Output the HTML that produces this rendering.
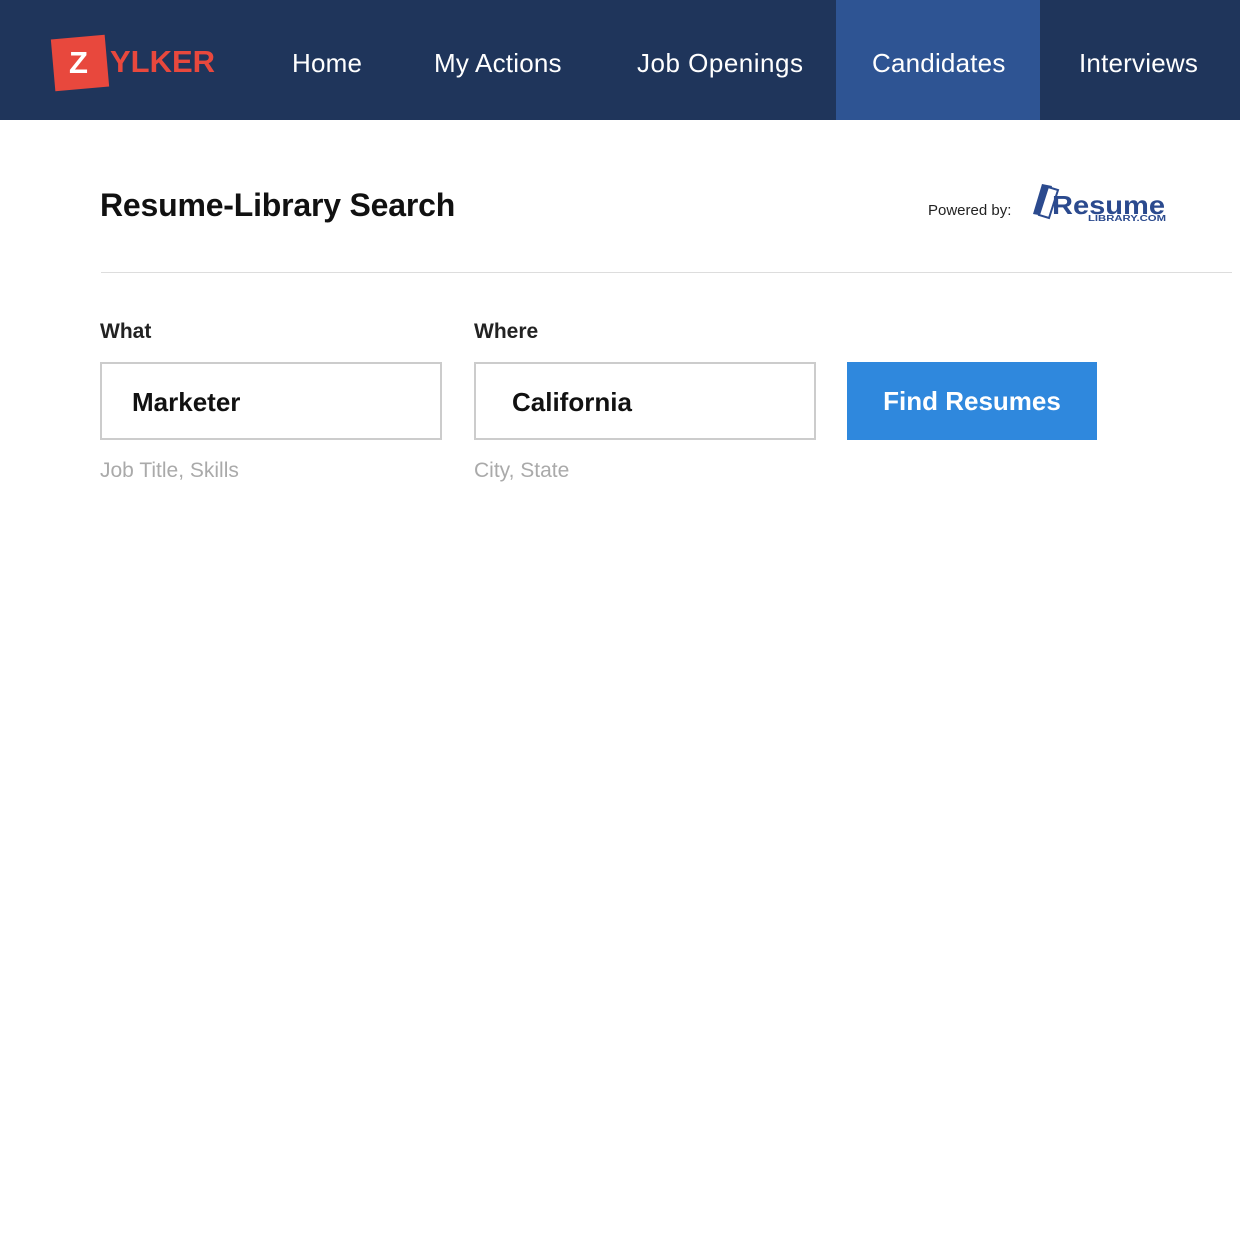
<!DOCTYPE html>
<html><head><style>
*{margin:0;padding:0;box-sizing:border-box}
body{width:1240px;height:1236px;background:#fff;font-family:"Liberation Sans",sans-serif;position:relative;overflow:hidden}
.nav{position:absolute;left:0;top:0;width:1240px;height:120px;background:#1f355b}
.nav .it{position:absolute;top:0;height:120px;line-height:126px;color:#fff;font-size:26px;letter-spacing:0.2px}
.act{background:#2e5493}
.lbl{position:absolute;font-size:21px;color:#222;font-weight:bold}
.inp{position:absolute;top:362px;height:78px;border:2px solid #ccc;font-size:26px;font-weight:bold;color:#111;line-height:76px}
.hint{position:absolute;top:459px;font-size:21px;color:#aaa}
</style></head><body>
<div class="nav">
 <div style="position:absolute;left:53px;top:37px;width:54px;height:52px;background:#e8483d;transform:rotate(-5deg)"></div>
 <div style="position:absolute;left:69px;top:45px;color:#fff;font-size:31px;font-weight:bold">Z</div>
 <div style="position:absolute;left:110px;top:44px;color:#e8483d;font-size:31px;font-weight:bold">YLKER</div>
 <div class="it" style="left:292px">Home</div>
 <div class="it" style="left:434px">My Actions</div>
 <div class="it" style="left:637px;letter-spacing:0.5px">Job Openings</div>
 <div class="it act" style="left:836px;width:204px;padding-left:36px">Candidates</div>
 <div class="it" style="left:1079px">Interviews</div>
</div>
<div style="position:absolute;left:100px;top:187px;font-size:32px;color:#111;font-weight:bold;letter-spacing:-0.2px">Resume-Library Search</div>
<div style="position:absolute;left:928px;top:202px;font-size:15px;color:#222">Powered by:</div>
<svg style="position:absolute;left:1030px;top:180px" width="140" height="44" viewBox="0 0 140 44">
 <path d="M3 34 L12 4 L22 6 L14 36Z" fill="#2b4a8e"/>
 <path d="M9 35 L18 7 L28 10 L19 38Z" fill="#fff" stroke="#2b4a8e" stroke-width="2"/>
 <text x="22" y="34" font-family="Liberation Sans" font-weight="bold" font-size="26" fill="#2b4a8e" textLength="113" lengthAdjust="spacingAndGlyphs">Resume</text>
 <text x="58" y="41" font-family="Liberation Sans" font-weight="bold" font-size="8" fill="#2b4a8e" textLength="78" lengthAdjust="spacingAndGlyphs">LIBRARY.COM</text>
</svg>
<div style="position:absolute;left:101px;top:272px;width:1131px;height:1px;background:#ddd"></div>
<div class="lbl" style="left:100px;top:320px">What</div>
<div class="lbl" style="left:474px;top:320px">Where</div>
<div class="inp" style="left:100px;width:342px;padding-left:30px">Marketer</div>
<div class="inp" style="left:474px;width:342px;padding-left:36px">California</div>
<div style="position:absolute;left:847px;top:362px;width:250px;height:78px;background:#2f88dd;color:#fff;font-size:26px;font-weight:bold;text-align:center;line-height:78px">Find Resumes</div>
<div class="hint" style="left:100px">Job Title, Skills</div>
<div class="hint" style="left:474px">City, State</div>
</body></html>
